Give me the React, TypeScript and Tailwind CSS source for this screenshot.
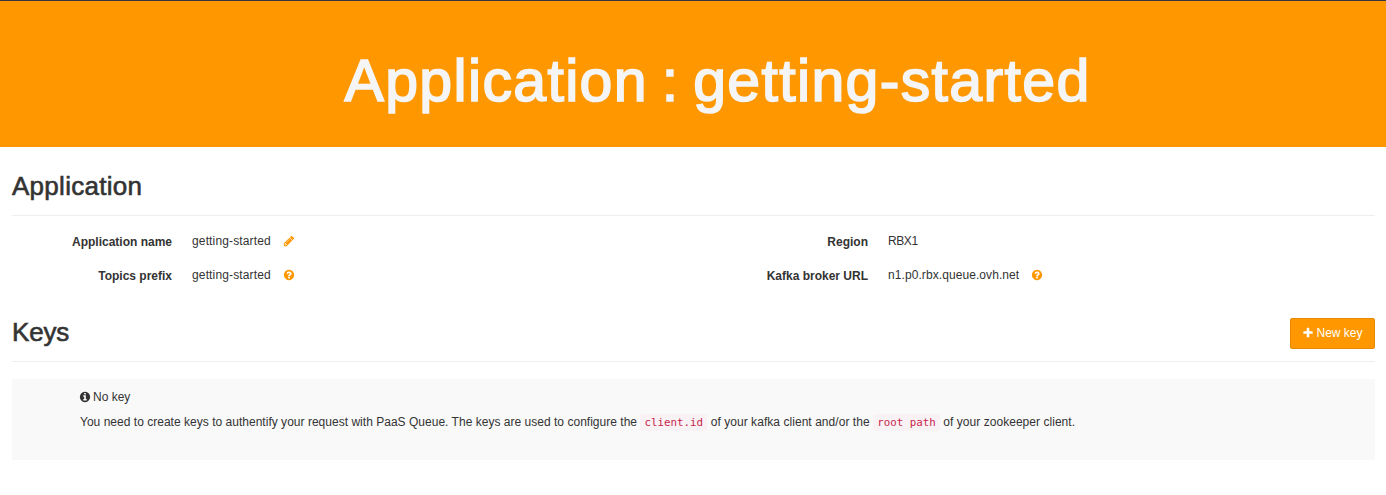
import type { ReactNode } from "react";

const CIRCLE =
  "m384 192q0 209-103 385.500t-279.500 279.500-385.500 103-385.500-103-279.500-279.500-103-385.500 103-385.500 279.500-279.500 385.500-103 385.500 103 279.500 279.500 103 385.500z";

const ICONS = {
  pencil:
    "M491 1536l91-91-235-235-91 91v107h128v128h107zm523-928q0-22-22-22-10 0-17 7l-542 542q-7 7-7 17 0 22 22 22 10 0 17-7l542-542q7-7 7-17zm-54-192l416 416-832 832h-416v-416zm683 96q0 53-37 90l-166 166-416-416 166-165q36-38 90-38 53 0 91 38l235 234q37 39 37 91z",
  question:
    "M1024 1376v-192q0-14-9-23t-23-9h-192q-14 0-23 9t-9 23v192q0 14 9 23t23 9h192q14 0 23-9t9-23zm256-672q0-88-55.500-163t-138.500-116-170-41q-243 0-371 213-15 24 8 42l132 100q7 6 19 6 16 0 25-12 53-68 86-92 34-24 86-24 48 0 85.500 26t37.500 59q0 38-20 61t-68 45q-63 28-115.500 86.500t-52.500 125.500v36q0 14 9 23t23 9h192q14 0 23-9t9-23q0-19 21.500-49.500t54.500-49.500q32-18 49-28.500t46-35 44.500-48 28-60.500 12.500-81z" +
    CIRCLE,
  info:
    "M1152 1376v-160q0-14-9-23t-23-9h-96v-512q0-14-9-23t-23-9h-320q-14 0-23 9t-9 23v160q0 14 9 23t23 9h96v320h-96q-14 0-23 9t-9 23v160q0 14 9 23t23 9h448q14 0 23-9t9-23zm-128-896v-160q0-14-9-23t-23-9h-192q-14 0-23 9t-9 23v160q0 14 9 23t23 9h192q14 0 23-9t9-23zM1280 704" +
    CIRCLE,
  plus:
    "M1600 736v192q0 40-28 68t-68 28h-416v416q0 40-28 68t-68 28h-192q-40 0-68-28t-28-68v-416h-416q-40 0-68-28t-28-68v-192q0-40 28-68t68-28h416v-416q0-40 28-68t68-28h192q40 0 68 28t28 68v416h416q40 0 68 28t28 68z",
};

function Icon({ name, className = "" }: { name: keyof typeof ICONS; className?: string }) {
  return (
    <svg viewBox="0 0 1792 1792" fill="currentColor" fillRule="evenodd" aria-hidden="true" className={`mb-0.5 size-3 shrink-0 ${className}`}>
      <path d={ICONS[name]} />
    </svg>
  );
}

function Field({ label, children, icon }: { label: string; children: ReactNode; icon?: "pencil" | "question" }) {
  return (
    <div className="flex h-[34px] gap-5">
      <dt className="w-40 pt-px text-right font-bold">{label}</dt>
      <dd className="flex h-[17px] items-center tracking-[0.14px]">
        <span>{children}</span>
        {icon && <Icon name={icon} className="ml-3 text-[#ff9800]" />}
      </dd>
    </div>
  );
}

function Heading({ children, className }: { children: ReactNode; className: string }) {
  return (
    <h2 className={`text-[26px] leading-[29px] [-webkit-text-stroke:0.6px_#333] ${className}`}>{children}</h2>
  );
}

function Code({ children }: { children: ReactNode }) {
  return (
    <code className="rounded-xs bg-[#f9f2f4] px-[4.2px] py-0.5 font-['DejaVu_Sans_Mono',monospace] text-[10.8px] text-[#c7254e]">
      {children}
    </code>
  );
}

export default function App() {
  return (
    <div className="h-[495px] bg-white font-['Liberation_Sans',sans-serif] text-xs leading-[17px] text-[#333]">
      <header className="h-[147px] border-t border-[#343541] bg-[#ff9800] pt-[47px] pl-[49px] text-center">
        <h1 className="text-[59px] leading-[66px] tracking-[1.35px] [word-spacing:-4px] text-[#f5f5f5] [-webkit-text-stroke:1.7px_#f5f5f5] [text-shadow:0_1px_0_rgba(0,0,0,0.1)]">
          Application : getting-started
        </h1>
      </header>
      <main className="pr-[11px] pl-3">
        <section>
          <div className="flex h-[69px] border-b border-[#eee] pt-[25px]">
            <Heading className="tracking-[0.28px]">Application</Heading>
          </div>
          <dl className="flex pt-[17px]">
            <div className="w-[696px]">
              <Field label="Application name" icon="pencil">getting-started</Field>
              <Field label="Topics prefix" icon="question">getting-started</Field>
            </div>
            <div>
              <Field label="Region"><span className="tracking-[-0.4px]">RBX1</span></Field>
              <Field label="Kafka broker URL" icon="question"><span className="tracking-[0.08px]">n1.p0.rbx.queue.ovh.net</span></Field>
            </div>
          </dl>
        </section>
        <section>
          <div className="flex h-[61px] items-start justify-between border-b border-[#eee]">
            <div className="pt-[17px]">
              <Heading className="tracking-[-0.2px]">Keys</Heading>
            </div>
            <button className="mt-[17px] flex h-[31px] w-[85px] items-center justify-center gap-0.5 rounded-xs border border-[#e68900] bg-[#ff9800] text-white">
              <Icon name="plus" />
              New key
            </button>
          </div>
          <div className="mt-[17px] h-[81px] bg-[#f9f9f9] pt-2.5 pl-[68px] whitespace-nowrap">
            <p className="flex items-center gap-0.5">
              <Icon name="info" className="-ml-px" />
              No key
            </p>
            <p className="mt-2">
              <span className="tracking-[0.02px]">
                You need to create keys to authentify your request with PaaS Queue. The keys are used to configure the{" "}
              </span>
              <Code>client.id</Code>
              <span className="tracking-[0.05px]"> of your kafka client and/or the </span>
              <Code>root path</Code>
              <span className="tracking-[0.04px]"> of your zookeeper client.</span>
            </p>
          </div>
        </section>
      </main>
    </div>
  );
}
